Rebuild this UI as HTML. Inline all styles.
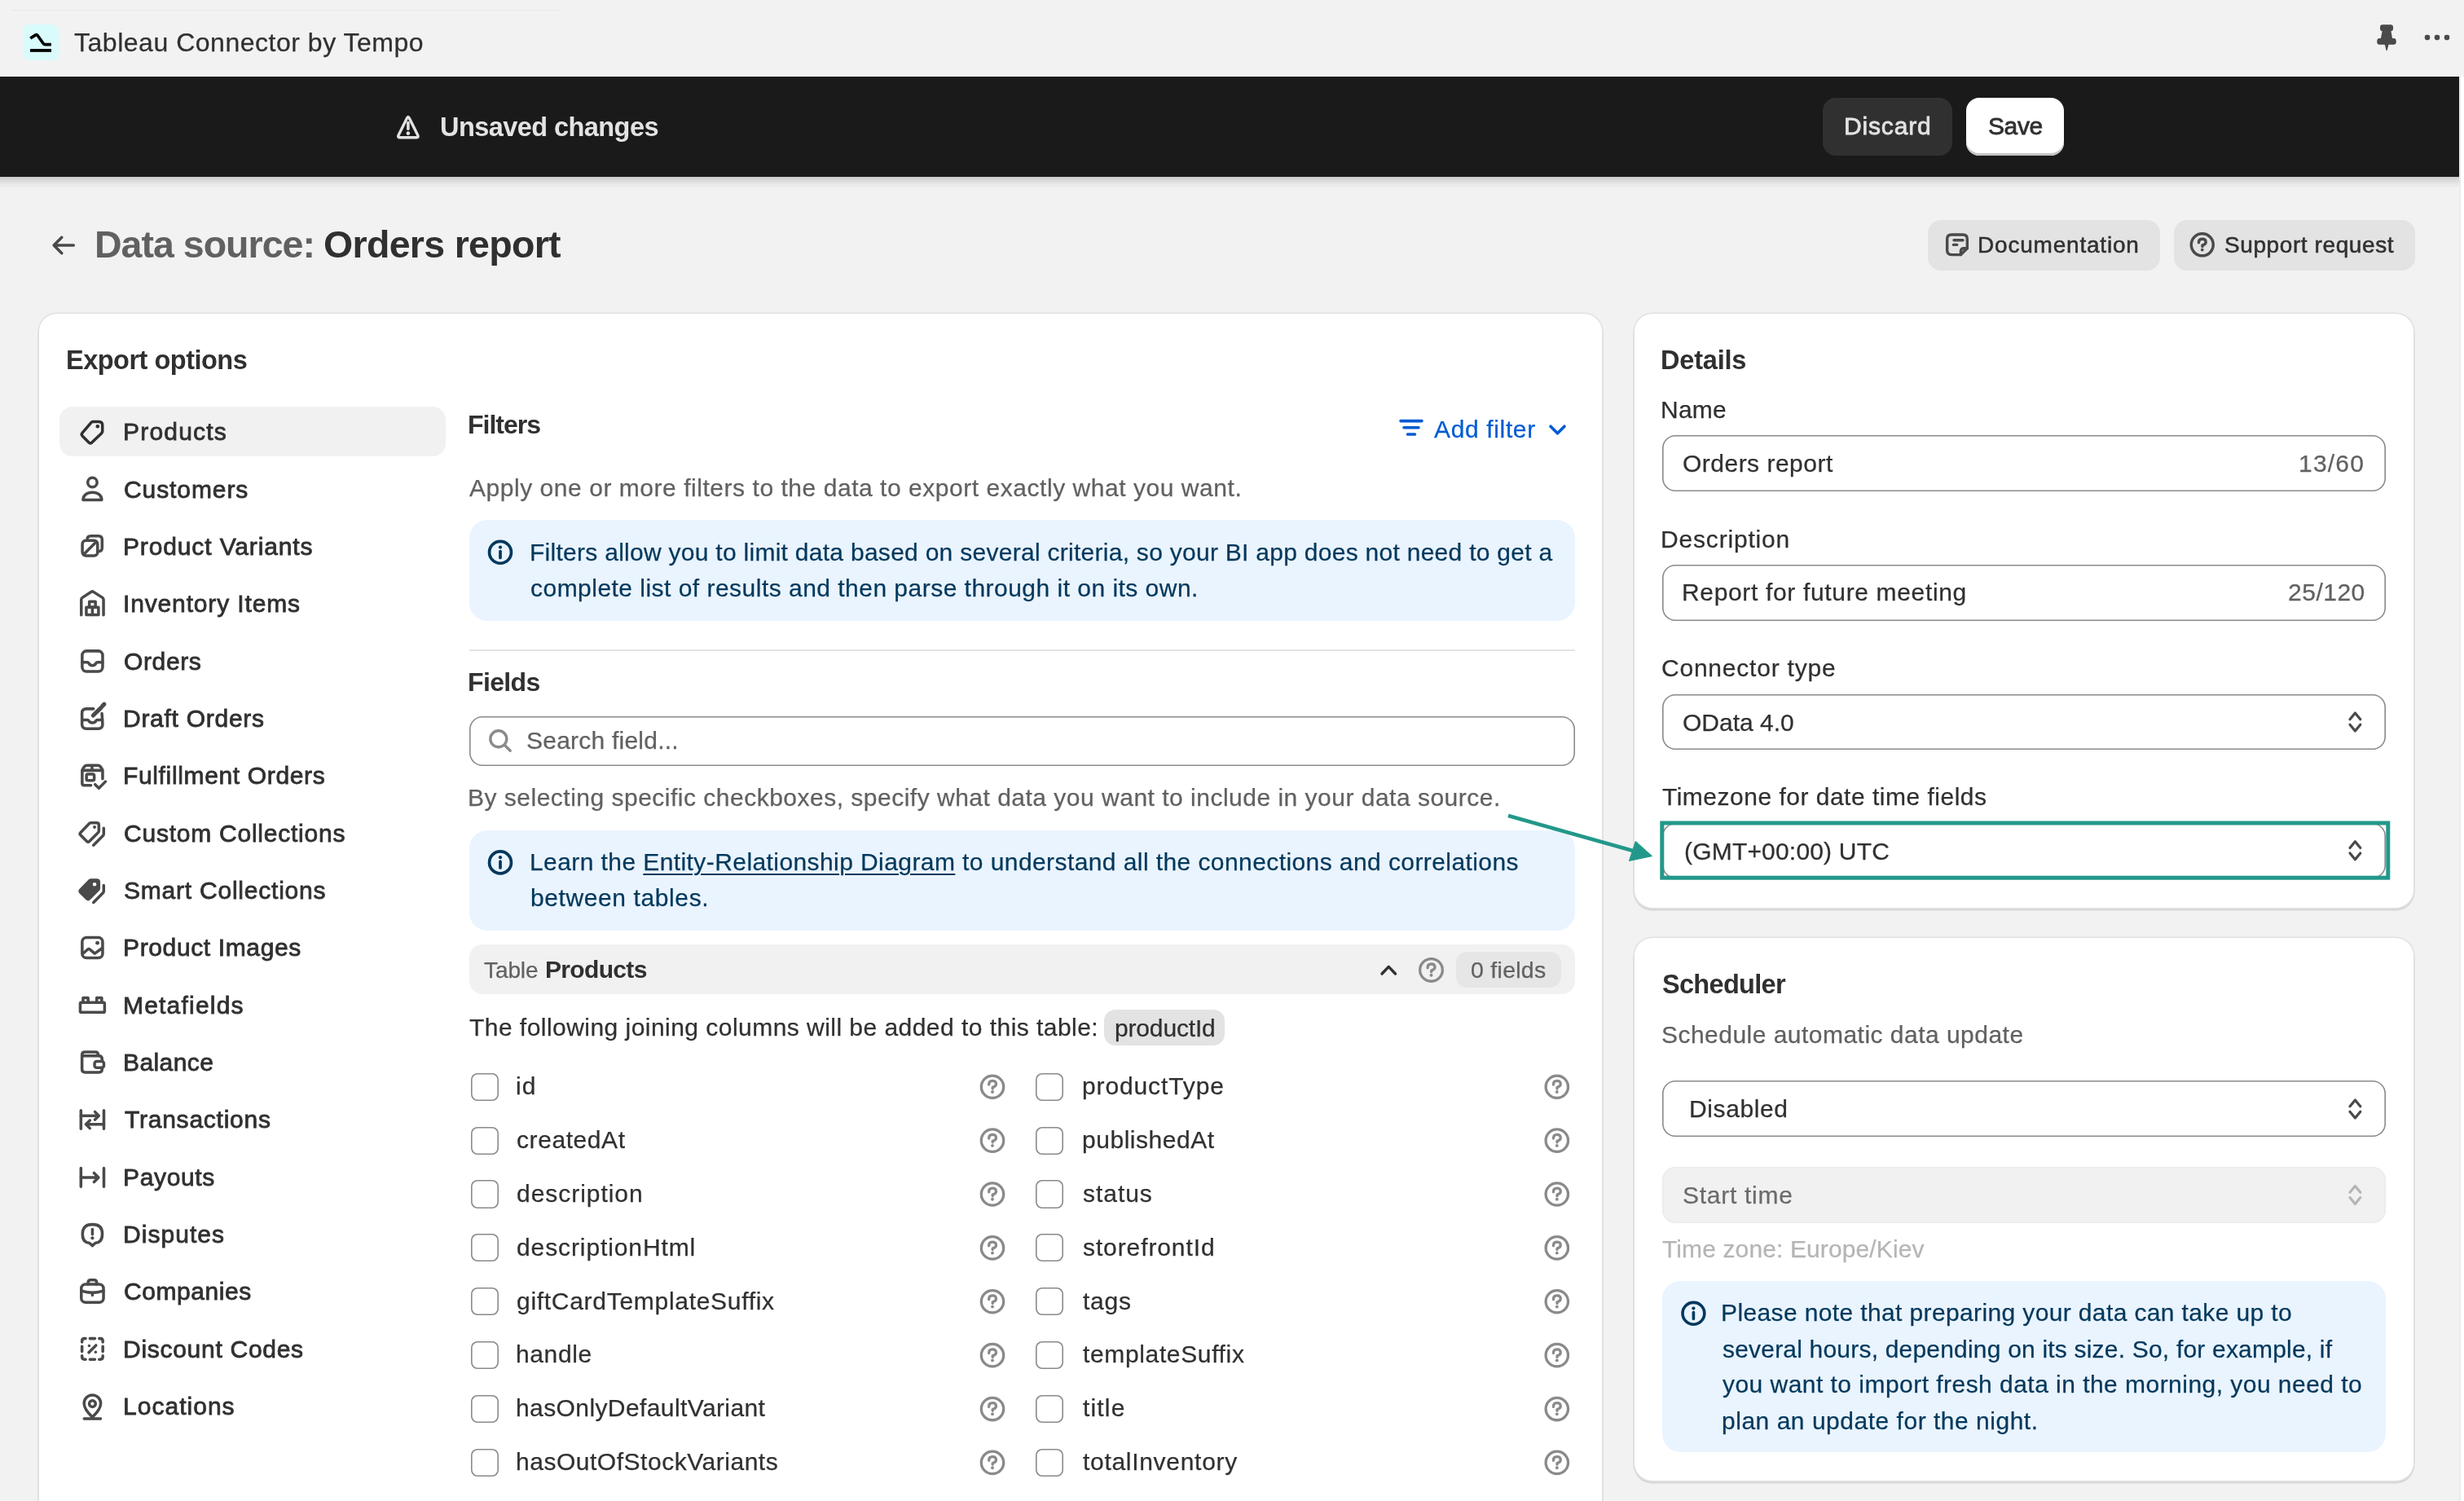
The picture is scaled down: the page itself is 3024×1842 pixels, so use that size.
<!DOCTYPE html>
<html><head><meta charset="utf-8"><style>
html,body{margin:0;padding:0;}
body{width:3024px;height:1842px;overflow:hidden;background:#f2f2f2;position:relative;font-family:"Liberation Sans", sans-serif;}
</style></head><body>
<div style="position:absolute;left:16.00px;top:12.00px;width:670.00px;height:1.00px;background:#e6e6e6"></div>
<div style="position:absolute;left:28.00px;top:30.00px;width:44.00px;height:44.00px;background:#d9fbfc;border-radius:8px"></div>
<div style="position:absolute;left:3018.00px;top:94.00px;width:2.00px;height:1748.00px;background:#ebebeb"></div>
<div style="position:absolute;left:3020.00px;top:94.00px;width:4.00px;height:1748.00px;background:#ffffff"></div>
<div style="position:absolute;left:0.00px;top:217.00px;width:3018.00px;height:13.00px;background:linear-gradient(#c6c6c6 0%, #d6d6d6 22%, #dddddd 40%, #e2e2e2 55%, #eaeaea 70%, #ebebeb 92%, #f2f2f2 100%)"></div>
<div style="position:absolute;left:0.00px;top:94.00px;width:3018.00px;height:123.00px;background:#1a1a1a"></div>
<div style="position:absolute;left:2237.00px;top:120.00px;width:159.00px;height:71.00px;background:#303030;border-radius:16px"></div>
<div style="position:absolute;left:2413.00px;top:120.00px;width:120.00px;height:71.00px;background:#fff;border-radius:16px;box-shadow:inset 0 -3px 0 #c4c4c4"></div>
<div style="position:absolute;left:2366.00px;top:270.00px;width:285.00px;height:62.00px;background:#e3e3e3;border-radius:16px"></div>
<div style="position:absolute;left:2668.00px;top:270.00px;width:296.00px;height:62.00px;background:#e3e3e3;border-radius:16px"></div>
<div style="position:absolute;left:48.00px;top:385.00px;width:1918.30px;height:1600.00px;background:#fff;border-radius:22px;box-shadow:0 0 0 1.6px #e1e1e1, 0 2px 0 1.6px #d6d6d6"></div>
<div style="position:absolute;left:2005.50px;top:385.40px;width:956.50px;height:728.20px;background:#fff;border-radius:22px;box-shadow:0 0 0 1.6px #e1e1e1, 0 2px 0 1.6px #d6d6d6"></div>
<div style="position:absolute;left:2005.50px;top:1151.25px;width:956.50px;height:665.75px;background:#fff;border-radius:22px;box-shadow:0 0 0 1.6px #e1e1e1, 0 2px 0 1.6px #d6d6d6"></div>
<div style="position:absolute;left:73.00px;top:499.00px;width:474.40px;height:60.50px;background:#f1f1f1;border-radius:16px"></div>
<div style="position:absolute;left:575.60px;top:638.00px;width:1357.00px;height:124.00px;background:#eaf4ff;border-radius:22px"></div>
<div style="position:absolute;left:575.60px;top:797.00px;width:1357.00px;height:2.00px;background:#e3e3e3"></div>
<div style="position:absolute;left:575.60px;top:878.50px;width:1357.00px;height:61.00px;background:#fff;border-radius:16px;box-shadow:inset 0 0 0 1.6px #8a8a8a"></div>
<div style="position:absolute;left:575.60px;top:1019.00px;width:1357.00px;height:122.50px;background:#eaf4ff;border-radius:22px"></div>
<div style="position:absolute;left:575.60px;top:1159.40px;width:1357.00px;height:61.00px;background:#f1f1f1;border-radius:16px"></div>
<div style="position:absolute;left:1786.60px;top:1168.00px;width:129.20px;height:44.00px;background:#e6e6e6;border-radius:14px"></div>
<div style="position:absolute;left:1354.80px;top:1239.00px;width:148.70px;height:44.00px;background:#e3e3e3;border-radius:14px"></div>
<div style="position:absolute;left:577.60px;top:1316.70px;width:34.10px;height:34.10px;background:#fff;border-radius:8px;box-shadow:inset 0 0 0 1.6px #8a8a8a"></div>
<div style="position:absolute;left:1271.40px;top:1316.70px;width:34.10px;height:34.10px;background:#fff;border-radius:8px;box-shadow:inset 0 0 0 1.6px #8a8a8a"></div>
<div style="position:absolute;left:577.60px;top:1382.58px;width:34.10px;height:34.10px;background:#fff;border-radius:8px;box-shadow:inset 0 0 0 1.6px #8a8a8a"></div>
<div style="position:absolute;left:1271.40px;top:1382.58px;width:34.10px;height:34.10px;background:#fff;border-radius:8px;box-shadow:inset 0 0 0 1.6px #8a8a8a"></div>
<div style="position:absolute;left:577.60px;top:1448.46px;width:34.10px;height:34.10px;background:#fff;border-radius:8px;box-shadow:inset 0 0 0 1.6px #8a8a8a"></div>
<div style="position:absolute;left:1271.40px;top:1448.46px;width:34.10px;height:34.10px;background:#fff;border-radius:8px;box-shadow:inset 0 0 0 1.6px #8a8a8a"></div>
<div style="position:absolute;left:577.60px;top:1514.34px;width:34.10px;height:34.10px;background:#fff;border-radius:8px;box-shadow:inset 0 0 0 1.6px #8a8a8a"></div>
<div style="position:absolute;left:1271.40px;top:1514.34px;width:34.10px;height:34.10px;background:#fff;border-radius:8px;box-shadow:inset 0 0 0 1.6px #8a8a8a"></div>
<div style="position:absolute;left:577.60px;top:1580.22px;width:34.10px;height:34.10px;background:#fff;border-radius:8px;box-shadow:inset 0 0 0 1.6px #8a8a8a"></div>
<div style="position:absolute;left:1271.40px;top:1580.22px;width:34.10px;height:34.10px;background:#fff;border-radius:8px;box-shadow:inset 0 0 0 1.6px #8a8a8a"></div>
<div style="position:absolute;left:577.60px;top:1646.10px;width:34.10px;height:34.10px;background:#fff;border-radius:8px;box-shadow:inset 0 0 0 1.6px #8a8a8a"></div>
<div style="position:absolute;left:1271.40px;top:1646.10px;width:34.10px;height:34.10px;background:#fff;border-radius:8px;box-shadow:inset 0 0 0 1.6px #8a8a8a"></div>
<div style="position:absolute;left:577.60px;top:1711.98px;width:34.10px;height:34.10px;background:#fff;border-radius:8px;box-shadow:inset 0 0 0 1.6px #8a8a8a"></div>
<div style="position:absolute;left:1271.40px;top:1711.98px;width:34.10px;height:34.10px;background:#fff;border-radius:8px;box-shadow:inset 0 0 0 1.6px #8a8a8a"></div>
<div style="position:absolute;left:577.60px;top:1777.86px;width:34.10px;height:34.10px;background:#fff;border-radius:8px;box-shadow:inset 0 0 0 1.6px #8a8a8a"></div>
<div style="position:absolute;left:1271.40px;top:1777.86px;width:34.10px;height:34.10px;background:#fff;border-radius:8px;box-shadow:inset 0 0 0 1.6px #8a8a8a"></div>
<div style="position:absolute;left:2039.70px;top:534.40px;width:888.80px;height:69.00px;background:#fff;border-radius:16px;box-shadow:inset 0 0 0 1.6px #8a8a8a"></div>
<div style="position:absolute;left:2039.70px;top:692.60px;width:888.80px;height:69.00px;background:#fff;border-radius:16px;box-shadow:inset 0 0 0 1.6px #8a8a8a"></div>
<div style="position:absolute;left:2039.70px;top:851.60px;width:888.80px;height:68.70px;background:#fff;border-radius:16px;box-shadow:inset 0 0 0 1.6px #8a8a8a"></div>
<div style="position:absolute;left:2039.70px;top:1009.60px;width:888.80px;height:68.70px;background:#fff;border-radius:16px;box-shadow:inset 0 0 0 1.6px #8a8a8a"></div>
<div style="position:absolute;left:2039.70px;top:1326.20px;width:888.80px;height:69.00px;background:#fff;border-radius:16px;box-shadow:inset 0 0 0 1.6px #8a8a8a"></div>
<div style="position:absolute;left:2039.70px;top:1431.50px;width:888.80px;height:69.70px;background:#f1f1f1;border-radius:16px;box-shadow:inset 0 0 0 1.6px #ebebeb"></div>
<div style="position:absolute;left:2039.70px;top:1572.20px;width:888.80px;height:210.20px;background:#eaf4ff;border-radius:22px"></div>
<div style="position:absolute;left:91.40px;top:36.02px;font-size:32px;line-height:32px;font-weight:400;-webkit-text-stroke:0.25px #303030;color:#303030;letter-spacing:0.518px;white-space:nowrap;will-change:transform">Tableau Connector by Tempo</div>
<div style="position:absolute;left:540.00px;top:139.77px;font-size:32.5px;line-height:32.5px;font-weight:700;color:#e3e3e3;letter-spacing:-0.563px;white-space:nowrap;will-change:transform">Unsaved changes</div>
<div style="position:absolute;left:2263.00px;top:139.52px;font-size:30px;line-height:30px;font-weight:400;-webkit-text-stroke:0.8px #e3e3e3;color:#e3e3e3;letter-spacing:0.833px;white-space:nowrap;will-change:transform">Discard</div>
<div style="position:absolute;left:2439.80px;top:139.52px;font-size:30px;line-height:30px;font-weight:400;-webkit-text-stroke:0.8px #303030;color:#303030;letter-spacing:-0.398px;white-space:nowrap;will-change:transform">Save</div>
<div style="position:absolute;left:116.00px;top:276.77px;font-size:46.5px;line-height:46.5px;font-weight:700;color:#616161;letter-spacing:-0.981px;white-space:nowrap;will-change:transform">Data source:</div>
<div style="position:absolute;left:396.60px;top:276.77px;font-size:46.5px;line-height:46.5px;font-weight:700;color:#303030;letter-spacing:-0.681px;white-space:nowrap;will-change:transform">Orders report</div>
<div style="position:absolute;left:2427.30px;top:286.52px;font-size:28px;line-height:28px;font-weight:400;-webkit-text-stroke:0.55px #303030;color:#303030;letter-spacing:0.795px;white-space:nowrap;will-change:transform">Documentation</div>
<div style="position:absolute;left:2729.50px;top:286.52px;font-size:28px;line-height:28px;font-weight:400;-webkit-text-stroke:0.55px #303030;color:#303030;letter-spacing:0.596px;white-space:nowrap;will-change:transform">Support request</div>
<div style="position:absolute;left:81.00px;top:425.77px;font-size:32.5px;line-height:32.5px;font-weight:700;color:#303030;letter-spacing:-0.501px;white-space:nowrap;will-change:transform">Export options</div>
<div style="position:absolute;left:151.00px;top:514.52px;font-size:30px;line-height:30px;font-weight:400;-webkit-text-stroke:0.8px #303030;color:#303030;letter-spacing:1.200px;white-space:nowrap;will-change:transform">Products</div>
<div style="position:absolute;left:152.00px;top:585.52px;font-size:30px;line-height:30px;font-weight:400;-webkit-text-stroke:0.8px #303030;color:#303030;letter-spacing:0.908px;white-space:nowrap;will-change:transform">Customers</div>
<div style="position:absolute;left:151.00px;top:655.52px;font-size:30px;line-height:30px;font-weight:400;-webkit-text-stroke:0.8px #303030;color:#303030;letter-spacing:0.863px;white-space:nowrap;will-change:transform">Product Variants</div>
<div style="position:absolute;left:151.00px;top:725.52px;font-size:30px;line-height:30px;font-weight:400;-webkit-text-stroke:0.8px #303030;color:#303030;letter-spacing:0.852px;white-space:nowrap;will-change:transform">Inventory Items</div>
<div style="position:absolute;left:152.00px;top:796.52px;font-size:30px;line-height:30px;font-weight:400;-webkit-text-stroke:0.8px #303030;color:#303030;letter-spacing:0.623px;white-space:nowrap;will-change:transform">Orders</div>
<div style="position:absolute;left:151.00px;top:866.52px;font-size:30px;line-height:30px;font-weight:400;-webkit-text-stroke:0.8px #303030;color:#303030;letter-spacing:0.725px;white-space:nowrap;will-change:transform">Draft Orders</div>
<div style="position:absolute;left:151.00px;top:936.52px;font-size:30px;line-height:30px;font-weight:400;-webkit-text-stroke:0.8px #303030;color:#303030;letter-spacing:0.646px;white-space:nowrap;will-change:transform">Fulfillment Orders</div>
<div style="position:absolute;left:152.00px;top:1007.52px;font-size:30px;line-height:30px;font-weight:400;-webkit-text-stroke:0.8px #303030;color:#303030;letter-spacing:0.763px;white-space:nowrap;will-change:transform">Custom Collections</div>
<div style="position:absolute;left:152.00px;top:1077.52px;font-size:30px;line-height:30px;font-weight:400;-webkit-text-stroke:0.8px #303030;color:#303030;letter-spacing:0.776px;white-space:nowrap;will-change:transform">Smart Collections</div>
<div style="position:absolute;left:151.00px;top:1147.52px;font-size:30px;line-height:30px;font-weight:400;-webkit-text-stroke:0.8px #303030;color:#303030;letter-spacing:0.631px;white-space:nowrap;will-change:transform">Product Images</div>
<div style="position:absolute;left:151.00px;top:1218.52px;font-size:30px;line-height:30px;font-weight:400;-webkit-text-stroke:0.8px #303030;color:#303030;letter-spacing:1.200px;white-space:nowrap;will-change:transform">Metafields</div>
<div style="position:absolute;left:151.00px;top:1288.52px;font-size:30px;line-height:30px;font-weight:400;-webkit-text-stroke:0.8px #303030;color:#303030;letter-spacing:0.412px;white-space:nowrap;will-change:transform">Balance</div>
<div style="position:absolute;left:153.00px;top:1358.52px;font-size:30px;line-height:30px;font-weight:400;-webkit-text-stroke:0.8px #303030;color:#303030;letter-spacing:0.761px;white-space:nowrap;will-change:transform">Transactions</div>
<div style="position:absolute;left:151.00px;top:1429.52px;font-size:30px;line-height:30px;font-weight:400;-webkit-text-stroke:0.8px #303030;color:#303030;letter-spacing:0.650px;white-space:nowrap;will-change:transform">Payouts</div>
<div style="position:absolute;left:151.00px;top:1499.52px;font-size:30px;line-height:30px;font-weight:400;-webkit-text-stroke:0.8px #303030;color:#303030;letter-spacing:1.040px;white-space:nowrap;will-change:transform">Disputes</div>
<div style="position:absolute;left:152.00px;top:1569.52px;font-size:30px;line-height:30px;font-weight:400;-webkit-text-stroke:0.8px #303030;color:#303030;letter-spacing:0.557px;white-space:nowrap;will-change:transform">Companies</div>
<div style="position:absolute;left:151.00px;top:1640.52px;font-size:30px;line-height:30px;font-weight:400;-webkit-text-stroke:0.8px #303030;color:#303030;letter-spacing:0.718px;white-space:nowrap;will-change:transform">Discount Codes</div>
<div style="position:absolute;left:151.00px;top:1710.52px;font-size:30px;line-height:30px;font-weight:400;-webkit-text-stroke:0.8px #303030;color:#303030;letter-spacing:1.022px;white-space:nowrap;will-change:transform">Locations</div>
<div style="position:absolute;left:573.60px;top:505.02px;font-size:32px;line-height:32px;font-weight:700;color:#303030;letter-spacing:-1.000px;white-space:nowrap;will-change:transform">Filters</div>
<div style="position:absolute;left:1759.50px;top:511.52px;font-size:30px;line-height:30px;font-weight:400;-webkit-text-stroke:0.25px #005bd3;color:#005bd3;letter-spacing:0.645px;white-space:nowrap;will-change:transform">Add filter</div>
<div style="position:absolute;left:575.60px;top:583.52px;font-size:30px;line-height:30px;font-weight:400;-webkit-text-stroke:0.25px #616161;color:#616161;letter-spacing:0.540px;white-space:nowrap;will-change:transform">Apply one or more filters to the data to export exactly what you want.</div>
<div style="position:absolute;left:649.75px;top:662.52px;font-size:30px;line-height:30px;font-weight:400;-webkit-text-stroke:0.25px #00385c;color:#00385c;letter-spacing:0.275px;white-space:nowrap;will-change:transform">Filters allow you to limit data based on several criteria, so your BI app does not need to get a</div>
<div style="position:absolute;left:650.75px;top:706.52px;font-size:30px;line-height:30px;font-weight:400;-webkit-text-stroke:0.25px #00385c;color:#00385c;letter-spacing:0.475px;white-space:nowrap;will-change:transform">complete list of results and then parse through it on its own.</div>
<div style="position:absolute;left:573.60px;top:821.02px;font-size:32px;line-height:32px;font-weight:700;color:#303030;letter-spacing:-0.654px;white-space:nowrap;will-change:transform">Fields</div>
<div style="position:absolute;left:645.60px;top:893.52px;font-size:30px;line-height:30px;font-weight:400;-webkit-text-stroke:0.25px #616161;color:#616161;letter-spacing:0.229px;white-space:nowrap;will-change:transform">Search field...</div>
<div style="position:absolute;left:573.60px;top:963.52px;font-size:30px;line-height:30px;font-weight:400;-webkit-text-stroke:0.25px #616161;color:#616161;letter-spacing:0.494px;white-space:nowrap;will-change:transform">By selecting specific checkboxes, specify what data you want to include in your data source.</div>
<div style="position:absolute;left:649.75px;top:1042.52px;font-size:30px;line-height:30px;font-weight:400;-webkit-text-stroke:0.25px #00385c;color:#00385c;letter-spacing:0.416px;white-space:nowrap;will-change:transform">Learn the <span style="text-decoration:underline;text-decoration-thickness:2px;text-underline-offset:4px">Entity-Relationship Diagram</span> to understand all the connections and correlations</div>
<div style="position:absolute;left:650.75px;top:1086.52px;font-size:30px;line-height:30px;font-weight:400;-webkit-text-stroke:0.25px #00385c;color:#00385c;letter-spacing:0.603px;white-space:nowrap;will-change:transform">between tables.</div>
<div style="position:absolute;left:594.00px;top:1176.52px;font-size:28px;line-height:28px;font-weight:400;-webkit-text-stroke:0.25px #616161;color:#616161;letter-spacing:-0.091px;white-space:nowrap;will-change:transform">Table</div>
<div style="position:absolute;left:668.80px;top:1174.52px;font-size:30px;line-height:30px;font-weight:700;color:#303030;letter-spacing:-0.662px;white-space:nowrap;will-change:transform">Products</div>
<div style="position:absolute;left:1805.00px;top:1175.77px;font-size:28.5px;line-height:28.5px;font-weight:400;-webkit-text-stroke:0.25px #616161;color:#616161;letter-spacing:0.278px;white-space:nowrap;will-change:transform">0 fields</div>
<div style="position:absolute;left:575.60px;top:1245.52px;font-size:30px;line-height:30px;font-weight:400;-webkit-text-stroke:0.25px #303030;color:#303030;letter-spacing:0.461px;white-space:nowrap;will-change:transform">The following joining columns will be added to this table:</div>
<div style="position:absolute;left:1368.40px;top:1246.52px;font-size:30px;line-height:30px;font-weight:400;-webkit-text-stroke:0.25px #303030;color:#303030;letter-spacing:-0.162px;white-space:nowrap;will-change:transform">productId</div>
<div style="position:absolute;left:633.30px;top:1317.52px;font-size:30px;line-height:30px;font-weight:400;-webkit-text-stroke:0.25px #303030;color:#303030;letter-spacing:1.200px;white-space:nowrap;will-change:transform">id</div>
<div style="position:absolute;left:1327.80px;top:1317.52px;font-size:30px;line-height:30px;font-weight:400;-webkit-text-stroke:0.25px #303030;color:#303030;letter-spacing:0.878px;white-space:nowrap;will-change:transform">productType</div>
<div style="position:absolute;left:634.30px;top:1383.52px;font-size:30px;line-height:30px;font-weight:400;-webkit-text-stroke:0.25px #303030;color:#303030;letter-spacing:0.578px;white-space:nowrap;will-change:transform">createdAt</div>
<div style="position:absolute;left:1327.80px;top:1383.52px;font-size:30px;line-height:30px;font-weight:400;-webkit-text-stroke:0.25px #303030;color:#303030;letter-spacing:0.525px;white-space:nowrap;will-change:transform">publishedAt</div>
<div style="position:absolute;left:634.30px;top:1449.52px;font-size:30px;line-height:30px;font-weight:400;-webkit-text-stroke:0.25px #303030;color:#303030;letter-spacing:0.961px;white-space:nowrap;will-change:transform">description</div>
<div style="position:absolute;left:1328.80px;top:1449.52px;font-size:30px;line-height:30px;font-weight:400;-webkit-text-stroke:0.25px #303030;color:#303030;letter-spacing:0.952px;white-space:nowrap;will-change:transform">status</div>
<div style="position:absolute;left:634.30px;top:1515.52px;font-size:30px;line-height:30px;font-weight:400;-webkit-text-stroke:0.25px #303030;color:#303030;letter-spacing:0.895px;white-space:nowrap;will-change:transform">descriptionHtml</div>
<div style="position:absolute;left:1328.80px;top:1515.52px;font-size:30px;line-height:30px;font-weight:400;-webkit-text-stroke:0.25px #303030;color:#303030;letter-spacing:0.895px;white-space:nowrap;will-change:transform">storefrontId</div>
<div style="position:absolute;left:634.30px;top:1581.52px;font-size:30px;line-height:30px;font-weight:400;-webkit-text-stroke:0.25px #303030;color:#303030;letter-spacing:0.707px;white-space:nowrap;will-change:transform">giftCardTemplateSuffix</div>
<div style="position:absolute;left:1328.80px;top:1581.52px;font-size:30px;line-height:30px;font-weight:400;-webkit-text-stroke:0.25px #303030;color:#303030;letter-spacing:0.765px;white-space:nowrap;will-change:transform">tags</div>
<div style="position:absolute;left:633.30px;top:1646.52px;font-size:30px;line-height:30px;font-weight:400;-webkit-text-stroke:0.25px #303030;color:#303030;letter-spacing:0.619px;white-space:nowrap;will-change:transform">handle</div>
<div style="position:absolute;left:1328.80px;top:1646.52px;font-size:30px;line-height:30px;font-weight:400;-webkit-text-stroke:0.25px #303030;color:#303030;letter-spacing:0.642px;white-space:nowrap;will-change:transform">templateSuffix</div>
<div style="position:absolute;left:633.30px;top:1712.52px;font-size:30px;line-height:30px;font-weight:400;-webkit-text-stroke:0.25px #303030;color:#303030;letter-spacing:0.400px;white-space:nowrap;will-change:transform">hasOnlyDefaultVariant</div>
<div style="position:absolute;left:1328.80px;top:1712.52px;font-size:30px;line-height:30px;font-weight:400;-webkit-text-stroke:0.25px #303030;color:#303030;letter-spacing:1.175px;white-space:nowrap;will-change:transform">title</div>
<div style="position:absolute;left:633.30px;top:1778.52px;font-size:30px;line-height:30px;font-weight:400;-webkit-text-stroke:0.25px #303030;color:#303030;letter-spacing:0.523px;white-space:nowrap;will-change:transform">hasOutOfStockVariants</div>
<div style="position:absolute;left:1328.80px;top:1778.52px;font-size:30px;line-height:30px;font-weight:400;-webkit-text-stroke:0.25px #303030;color:#303030;letter-spacing:0.700px;white-space:nowrap;will-change:transform">totalInventory</div>
<div style="position:absolute;left:2038.00px;top:425.77px;font-size:32.5px;line-height:32.5px;font-weight:700;color:#303030;letter-spacing:-0.200px;white-space:nowrap;will-change:transform">Details</div>
<div style="position:absolute;left:2038.00px;top:487.52px;font-size:30px;line-height:30px;font-weight:400;-webkit-text-stroke:0.25px #303030;color:#303030;letter-spacing:0.220px;white-space:nowrap;will-change:transform">Name</div>
<div style="position:absolute;left:2065.00px;top:553.52px;font-size:30px;line-height:30px;font-weight:400;-webkit-text-stroke:0.25px #303030;color:#303030;letter-spacing:0.487px;white-space:nowrap;will-change:transform">Orders report</div>
<div style="position:absolute;left:2821.30px;top:553.52px;font-size:30px;line-height:30px;font-weight:400;-webkit-text-stroke:0.25px #616161;color:#616161;letter-spacing:1.200px;white-space:nowrap;will-change:transform">13/60</div>
<div style="position:absolute;left:2038.00px;top:646.52px;font-size:30px;line-height:30px;font-weight:400;-webkit-text-stroke:0.25px #303030;color:#303030;letter-spacing:0.823px;white-space:nowrap;will-change:transform">Description</div>
<div style="position:absolute;left:2064.00px;top:711.52px;font-size:30px;line-height:30px;font-weight:400;-webkit-text-stroke:0.25px #303030;color:#303030;letter-spacing:0.658px;white-space:nowrap;will-change:transform">Report for future meeting</div>
<div style="position:absolute;left:2807.70px;top:711.52px;font-size:30px;line-height:30px;font-weight:400;-webkit-text-stroke:0.25px #616161;color:#616161;letter-spacing:0.505px;white-space:nowrap;will-change:transform">25/120</div>
<div style="position:absolute;left:2038.60px;top:804.52px;font-size:30px;line-height:30px;font-weight:400;-webkit-text-stroke:0.25px #303030;color:#303030;letter-spacing:0.779px;white-space:nowrap;will-change:transform">Connector type</div>
<div style="position:absolute;left:2065.40px;top:871.52px;font-size:30px;line-height:30px;font-weight:400;-webkit-text-stroke:0.25px #303030;color:#303030;letter-spacing:-0.007px;white-space:nowrap;will-change:transform">OData 4.0</div>
<div style="position:absolute;left:2039.60px;top:962.52px;font-size:30px;line-height:30px;font-weight:400;-webkit-text-stroke:0.25px #303030;color:#303030;letter-spacing:0.498px;white-space:nowrap;will-change:transform">Timezone for date time fields</div>
<div style="position:absolute;left:2067.00px;top:1029.52px;font-size:30px;line-height:30px;font-weight:400;-webkit-text-stroke:0.25px #303030;color:#303030;letter-spacing:0.189px;white-space:nowrap;will-change:transform">(GMT+00:00) UTC</div>
<div style="position:absolute;left:2040.00px;top:1191.77px;font-size:32.5px;line-height:32.5px;font-weight:700;color:#303030;letter-spacing:-0.699px;white-space:nowrap;will-change:transform">Scheduler</div>
<div style="position:absolute;left:2039.00px;top:1254.52px;font-size:30px;line-height:30px;font-weight:400;-webkit-text-stroke:0.25px #616161;color:#616161;letter-spacing:0.475px;white-space:nowrap;will-change:transform">Schedule automatic data update</div>
<div style="position:absolute;left:2072.60px;top:1345.52px;font-size:30px;line-height:30px;font-weight:400;-webkit-text-stroke:0.25px #303030;color:#303030;letter-spacing:0.607px;white-space:nowrap;will-change:transform">Disabled</div>
<div style="position:absolute;left:2065.00px;top:1451.52px;font-size:30px;line-height:30px;font-weight:400;-webkit-text-stroke:0.25px #6b6b6b;color:#6b6b6b;letter-spacing:0.724px;white-space:nowrap;will-change:transform">Start time</div>
<div style="position:absolute;left:2040.00px;top:1517.52px;font-size:30px;line-height:30px;font-weight:400;-webkit-text-stroke:0.25px #b5b5b5;color:#b5b5b5;letter-spacing:0.117px;white-space:nowrap;will-change:transform">Time zone: Europe/Kiev</div>
<div style="position:absolute;left:2112.00px;top:1595.52px;font-size:30px;line-height:30px;font-weight:400;-webkit-text-stroke:0.25px #00385c;color:#00385c;letter-spacing:0.371px;white-space:nowrap;will-change:transform">Please note that preparing your data can take up to</div>
<div style="position:absolute;left:2114.00px;top:1640.52px;font-size:30px;line-height:30px;font-weight:400;-webkit-text-stroke:0.25px #00385c;color:#00385c;letter-spacing:0.196px;white-space:nowrap;will-change:transform">several hours, depending on its size. So, for example, if</div>
<div style="position:absolute;left:2114.00px;top:1683.52px;font-size:30px;line-height:30px;font-weight:400;-webkit-text-stroke:0.25px #00385c;color:#00385c;letter-spacing:0.463px;white-space:nowrap;will-change:transform">you want to import fresh data in the morning, you need to</div>
<div style="position:absolute;left:2113.00px;top:1728.52px;font-size:30px;line-height:30px;font-weight:400;-webkit-text-stroke:0.25px #00385c;color:#00385c;letter-spacing:0.515px;white-space:nowrap;will-change:transform">plan an update for the night.</div>
<svg style="position:absolute;left:0;top:0" width="3024" height="1842" viewBox="0 0 3024 1842">
<g transform="translate(91.40,508.10) scale(2.2)" fill="none" stroke="#303030" stroke-width="1.6" stroke-linecap="round" stroke-linejoin="round"><path d="M10.2 4.3 L13.6 4.3 Q15.6 4.3 15.6 6.3 L15.6 9.5 Q15.6 10.2 15.1 10.7 L9.7 15.9 Q8.8 16.7 8.0 15.9 L4.4 12.2 Q3.6 11.3 4.4 10.5 L9.4 4.7 Q9.7 4.3 10.2 4.3 Z"/><circle cx="12.9" cy="6.9" r="1.05" fill="#303030" stroke="none"/></g>
<g transform="translate(91.40,578.43) scale(2.2)" fill="none" stroke="#4a4a4a" stroke-width="1.6" stroke-linecap="round" stroke-linejoin="round"><circle cx="10" cy="6.2" r="2.6"/><path d="M4.8 15.9 C4.8 13.3 7.1 11.7 10 11.7 C12.9 11.7 15.2 13.3 15.2 15.9 Z"/></g>
<g transform="translate(91.40,648.76) scale(2.2)" fill="none" stroke="#4a4a4a" stroke-width="1.6" stroke-linecap="round" stroke-linejoin="round"><path d="M7.1 6.4 V6.1 Q7.1 4.1 9.1 4.1 H13.4 Q15.4 4.1 15.4 6.1 V10.7 Q15.4 12.7 13.4 12.7 H13"/><rect x="4.4" y="6.6" width="8.5" height="8.5" rx="2"/><path d="M5.2 14.3 L12.1 7.4"/></g>
<g transform="translate(91.40,719.09) scale(2.2)" fill="none" stroke="#4a4a4a" stroke-width="1.6" stroke-linecap="round" stroke-linejoin="round"><path d="M3.8 16.2 V7.6 Q3.8 6.9 4.4 6.5 L9.4 3.3 Q10 2.9 10.6 3.3 L15.6 6.5 Q16.2 6.9 16.2 7.6 V16.2"/><rect x="6.6" y="11.9" width="6.8" height="4.2"/><path d="M10 11.9 V16.1"/><rect x="8.3" y="8.7" width="3.4" height="3.2"/></g>
<g transform="translate(91.40,789.42) scale(2.2)" fill="none" stroke="#4a4a4a" stroke-width="1.6" stroke-linecap="round" stroke-linejoin="round"><rect x="4.3" y="4.3" width="11.4" height="11.4" rx="2.4"/><path d="M4.3 10.6 H7.3 Q7.7 10.6 7.9 11 Q8.6 12.4 10 12.4 Q11.4 12.4 12.1 11 Q12.3 10.6 12.7 10.6 H15.7"/></g>
<g transform="translate(91.40,859.75) scale(2.2)" fill="none" stroke="#4a4a4a" stroke-width="1.6" stroke-linecap="round" stroke-linejoin="round"><path d="M10.6 4.6 H6.6 Q4.3 4.6 4.2 6.8 L4.2 13.3 Q4.3 15.65 6.6 15.65 H13.3 Q15.6 15.65 15.7 13.3 L15.3 7.2"/><path d="M4.3 10.75 H7.3 Q7.7 10.75 7.9 11.15 Q8.5 12.4 10 12.4 Q11.5 12.4 12.1 11.15 Q12.3 10.75 12.7 10.75 H15.6"/><path d="M10.4 8.3 L14.9 3.9" stroke-width="2.3"/><path d="M15.6 3.0 L16.6 2.0" stroke-width="2.3"/></g>
<g transform="translate(91.40,930.08) scale(2.2)" fill="none" stroke="#4a4a4a" stroke-width="1.6" stroke-linecap="round" stroke-linejoin="round"><path d="M15.7 11.7 V7.4 Q15.7 6.6 15.2 5.9 L14.4 4.8 Q13.9 4.2 13.1 4.2 H6.9 Q6.1 4.2 5.6 4.8 L4.8 5.9 Q4.3 6.6 4.3 7.4 V14.3 Q4.3 15.3 5.3 15.3 H9.2"/><path d="M4.4 6.95 H15.6 M9.8 4.3 V6.9"/><rect x="6.7" y="9.1" width="4.3" height="3.5" rx="0.8"/><path d="M11.5 14.8 L13.6 16.9 L17.3 13.2"/></g>
<g transform="translate(91.40,1000.41) scale(2.2)" fill="none" stroke="#4a4a4a" stroke-width="1.6" stroke-linecap="round" stroke-linejoin="round"><path d="M9.0 4.2 L12.4 4.2 Q13.6 4.2 13.6 5.4 L13.6 8.8 Q13.6 9.3 13.2 9.7 L8.3 14.6 Q7.6 15.3 6.9 14.6 L3.4 11.1 Q2.7 10.4 3.4 9.7 L8.3 4.6 Q8.6 4.2 9.0 4.2 Z"/><circle cx="11.2" cy="6.6" r="0.9" fill="#4a4a4a" stroke="none"/><path d="M16.3 7.2 V10.4 Q16.3 11 15.9 11.4 L10.6 16.7"/></g>
<g transform="translate(91.40,1070.74) scale(2.2)" fill="none" stroke="#4a4a4a" stroke-width="1.6" stroke-linecap="round" stroke-linejoin="round"><path d="M9.0 4.2 L12.4 4.2 Q13.6 4.2 13.6 5.4 L13.6 8.8 Q13.6 9.3 13.2 9.7 L8.3 14.6 Q7.6 15.3 6.9 14.6 L3.4 11.1 Q2.7 10.4 3.4 9.7 L8.3 4.6 Q8.6 4.2 9.0 4.2 Z" fill="#4a4a4a"/><circle cx="11.2" cy="6.6" r="1.0" fill="#fff" stroke="none"/><path d="M16.3 7.2 V10.4 Q16.3 11 15.9 11.4 L10.6 16.7"/></g>
<g transform="translate(91.40,1141.07) scale(2.2)" fill="none" stroke="#4a4a4a" stroke-width="1.6" stroke-linecap="round" stroke-linejoin="round"><rect x="4.3" y="4.3" width="11.4" height="11.4" rx="2.4"/><path d="M4.6 13.4 L7.4 10.9 Q8 10.4 8.6 10.9 L11.3 13.2 L15.5 10.2"/><circle cx="12.8" cy="7.3" r="1.1" fill="#4a4a4a" stroke="none"/></g>
<g transform="translate(91.40,1211.40) scale(2.2)" fill="none" stroke="#4a4a4a" stroke-width="1.6" stroke-linecap="round" stroke-linejoin="round"><rect x="3.2" y="8.6" width="13.6" height="5.4" rx="0.6"/><path d="M4.8 8.6 V6 H7.6 V8.6 M12.4 8.6 V6 H15.2 V8.6"/></g>
<g transform="translate(91.40,1281.73) scale(2.2)" fill="none" stroke="#4a4a4a" stroke-width="1.6" stroke-linecap="round" stroke-linejoin="round"><path d="M13.2 6.2 V5.8 Q13.2 4.2 11.6 4.2 H5.8 Q4.2 4.2 4.2 5.8 V13.8 Q4.2 15.6 6 15.6 H13.6 Q15.4 15.6 15.4 13.8 V13"/><path d="M4.2 6.4 H13.6 Q15.4 6.4 15.4 8.2 V9.2"/><rect x="11.2" y="9.4" width="5.2" height="3.6" rx="1.2"/></g>
<g transform="translate(91.40,1352.06) scale(2.2)" fill="none" stroke="#4a4a4a" stroke-width="1.6" stroke-linecap="round" stroke-linejoin="round"><path d="M3.6 4.9 V15.1 M16.4 4.9 V15.1"/><path d="M3.6 7.8 H13.6 M11.4 5.6 L13.6 7.8 L11.4 10.0"/><path d="M16.4 12.6 H6.4 M8.6 10.4 L6.4 12.6 L8.6 14.8"/></g>
<g transform="translate(91.40,1422.39) scale(2.2)" fill="none" stroke="#4a4a4a" stroke-width="1.6" stroke-linecap="round" stroke-linejoin="round"><path d="M3.6 5.1 V15.4 M16.4 5.1 V15.4"/><path d="M3.6 10.25 H13.4 M10.9 7.75 L13.4 10.25 L10.9 12.75"/></g>
<g transform="translate(91.40,1492.72) scale(2.2)" fill="none" stroke="#4a4a4a" stroke-width="1.6" stroke-linecap="round" stroke-linejoin="round"><path d="M10 16.4 L8.4 14.9 Q4.5 14.6 4.5 10 V9.6 Q4.5 4.5 10 4.5 Q15.5 4.5 15.5 9.6 V10 Q15.5 14.6 11.6 14.9 Z"/><path d="M10 7.2 V10"/><circle cx="10" cy="12.1" r="0.95" fill="#4a4a4a" stroke="none"/></g>
<g transform="translate(91.40,1563.05) scale(2.2)" fill="none" stroke="#4a4a4a" stroke-width="1.6" stroke-linecap="round" stroke-linejoin="round"><rect x="3.8" y="5.9" width="12.4" height="10.1" rx="2.4"/><path d="M7.6 5.9 V5.0 Q7.6 3.5 9.1 3.5 H10.9 Q12.4 3.5 12.4 5.0 V5.9"/><path d="M3.9 9.6 Q10 11.6 16.1 9.6"/><path d="M10 10.7 V12"/></g>
<g transform="translate(91.40,1633.38) scale(2.2)" fill="none" stroke="#4a4a4a" stroke-width="1.6" stroke-linecap="round" stroke-linejoin="round"><path d="M4.2 6.2 V5.6 Q4.2 4.2 5.6 4.2 H6.2 M8.6 4.2 H11.4 M13.8 4.2 H14.4 Q15.8 4.2 15.8 5.6 V6.2 M15.8 8.6 V11.4 M15.8 13.8 V14.4 Q15.8 15.8 14.4 15.8 H13.8 M11.4 15.8 H8.6 M6.2 15.8 H5.6 Q4.2 15.8 4.2 14.4 V13.8 M4.2 11.4 V8.6"/><path d="M8 12 L12 8"/><circle cx="8.2" cy="8.2" r="0.8" fill="#4a4a4a" stroke="none"/><circle cx="11.8" cy="11.8" r="0.8" fill="#4a4a4a" stroke="none"/></g>
<g transform="translate(91.40,1703.71) scale(2.2)" fill="none" stroke="#4a4a4a" stroke-width="1.6" stroke-linecap="round" stroke-linejoin="round"><path d="M10 16.1 C7 13.2 5.35 11 5.35 8.4 A4.65 4.65 0 0 1 14.65 8.4 C14.65 11 13 13.2 10 16.1 Z"/><circle cx="10" cy="8.6" r="1.75"/><path d="M5.4 16.9 H14.6"/></g>
<g fill="none" stroke="#e3e3e3" stroke-width="3.4" stroke-linecap="round" stroke-linejoin="round"><path d="M499.34 145.14 Q500.9 142.0 502.46 145.14 L512.64 165.66 Q514.2 168.8 510.7 168.8 L491.1 168.8 Q487.6 168.8 489.16 165.66 Z"/><path d="M500.9 150.6 V158.2" stroke-width="3.6"/></g><circle cx="500.9" cy="163.6" r="2.3" fill="#e3e3e3"/>
<g transform="translate(56.00,279.00) scale(2.2)" fill="none" stroke="#4a4a4a" stroke-width="1.6" stroke-linecap="round" stroke-linejoin="round"><path d="M15.6 10 H4.6 M9 5.6 L4.6 10 L9 14.4"/></g>
<g transform="translate(2380.00,278.30) scale(2.2)" fill="none" stroke="#4a4a4a" stroke-width="1.55" stroke-linecap="round" stroke-linejoin="round"><path d="M15.6 12.0 V6.8 Q15.6 4.4 13.2 4.4 H6.8 Q4.4 4.4 4.4 6.8 V13.2 Q4.4 15.6 6.8 15.6 H12.0 Z"/><path d="M12 15.6 V13.8 Q12 12 13.8 12 H15.6"/><path d="M8.2 7.5 H13.2 M7.9 10.05 H9.9"/></g>
<g fill="none" stroke="#4a4a4a" stroke-width="3.5" stroke-linecap="round" stroke-linejoin="round"><circle cx="2702.75" cy="300.35" r="13.50"/><path d="M2698.45 297.75 Q2698.45 293.15 2702.75 293.15 Q2707.15 293.15 2707.15 297.15 Q2707.15 299.75 2702.95 300.95 V302.55"/><circle cx="2702.75" cy="306.55" r="1.90" fill="#4a4a4a" stroke="none"/></g>
<g fill="none" stroke="#8a8a8a" stroke-width="3.3" stroke-linecap="round" stroke-linejoin="round"><circle cx="1756.50" cy="1190.40" r="13.85"/><path d="M1752.09 1187.73 Q1752.09 1183.01 1756.50 1183.01 Q1761.01 1183.01 1761.01 1187.12 Q1761.01 1189.78 1756.71 1191.02 V1192.66"/><circle cx="1756.50" cy="1196.76" r="1.95" fill="#8a8a8a" stroke="none"/></g>
<g fill="none" stroke="#8a8a8a" stroke-width="3.3" stroke-linecap="round" stroke-linejoin="round"><circle cx="1218.00" cy="1333.75" r="13.70"/><path d="M1213.64 1331.11 Q1213.64 1326.44 1218.00 1326.44 Q1222.47 1326.44 1222.47 1330.50 Q1222.47 1333.14 1218.20 1334.36 V1335.98"/><circle cx="1218.00" cy="1340.04" r="1.93" fill="#8a8a8a" stroke="none"/></g>
<g fill="none" stroke="#8a8a8a" stroke-width="3.3" stroke-linecap="round" stroke-linejoin="round"><circle cx="1910.80" cy="1333.75" r="13.70"/><path d="M1906.44 1331.11 Q1906.44 1326.44 1910.80 1326.44 Q1915.27 1326.44 1915.27 1330.50 Q1915.27 1333.14 1911.00 1334.36 V1335.98"/><circle cx="1910.80" cy="1340.04" r="1.93" fill="#8a8a8a" stroke="none"/></g>
<g fill="none" stroke="#8a8a8a" stroke-width="3.3" stroke-linecap="round" stroke-linejoin="round"><circle cx="1218.00" cy="1399.63" r="13.70"/><path d="M1213.64 1396.99 Q1213.64 1392.32 1218.00 1392.32 Q1222.47 1392.32 1222.47 1396.38 Q1222.47 1399.02 1218.20 1400.24 V1401.86"/><circle cx="1218.00" cy="1405.92" r="1.93" fill="#8a8a8a" stroke="none"/></g>
<g fill="none" stroke="#8a8a8a" stroke-width="3.3" stroke-linecap="round" stroke-linejoin="round"><circle cx="1910.80" cy="1399.63" r="13.70"/><path d="M1906.44 1396.99 Q1906.44 1392.32 1910.80 1392.32 Q1915.27 1392.32 1915.27 1396.38 Q1915.27 1399.02 1911.00 1400.24 V1401.86"/><circle cx="1910.80" cy="1405.92" r="1.93" fill="#8a8a8a" stroke="none"/></g>
<g fill="none" stroke="#8a8a8a" stroke-width="3.3" stroke-linecap="round" stroke-linejoin="round"><circle cx="1218.00" cy="1465.51" r="13.70"/><path d="M1213.64 1462.87 Q1213.64 1458.20 1218.00 1458.20 Q1222.47 1458.20 1222.47 1462.26 Q1222.47 1464.90 1218.20 1466.12 V1467.74"/><circle cx="1218.00" cy="1471.80" r="1.93" fill="#8a8a8a" stroke="none"/></g>
<g fill="none" stroke="#8a8a8a" stroke-width="3.3" stroke-linecap="round" stroke-linejoin="round"><circle cx="1910.80" cy="1465.51" r="13.70"/><path d="M1906.44 1462.87 Q1906.44 1458.20 1910.80 1458.20 Q1915.27 1458.20 1915.27 1462.26 Q1915.27 1464.90 1911.00 1466.12 V1467.74"/><circle cx="1910.80" cy="1471.80" r="1.93" fill="#8a8a8a" stroke="none"/></g>
<g fill="none" stroke="#8a8a8a" stroke-width="3.3" stroke-linecap="round" stroke-linejoin="round"><circle cx="1218.00" cy="1531.39" r="13.70"/><path d="M1213.64 1528.75 Q1213.64 1524.08 1218.00 1524.08 Q1222.47 1524.08 1222.47 1528.14 Q1222.47 1530.78 1218.20 1532.00 V1533.62"/><circle cx="1218.00" cy="1537.68" r="1.93" fill="#8a8a8a" stroke="none"/></g>
<g fill="none" stroke="#8a8a8a" stroke-width="3.3" stroke-linecap="round" stroke-linejoin="round"><circle cx="1910.80" cy="1531.39" r="13.70"/><path d="M1906.44 1528.75 Q1906.44 1524.08 1910.80 1524.08 Q1915.27 1524.08 1915.27 1528.14 Q1915.27 1530.78 1911.00 1532.00 V1533.62"/><circle cx="1910.80" cy="1537.68" r="1.93" fill="#8a8a8a" stroke="none"/></g>
<g fill="none" stroke="#8a8a8a" stroke-width="3.3" stroke-linecap="round" stroke-linejoin="round"><circle cx="1218.00" cy="1597.27" r="13.70"/><path d="M1213.64 1594.63 Q1213.64 1589.96 1218.00 1589.96 Q1222.47 1589.96 1222.47 1594.02 Q1222.47 1596.66 1218.20 1597.88 V1599.50"/><circle cx="1218.00" cy="1603.56" r="1.93" fill="#8a8a8a" stroke="none"/></g>
<g fill="none" stroke="#8a8a8a" stroke-width="3.3" stroke-linecap="round" stroke-linejoin="round"><circle cx="1910.80" cy="1597.27" r="13.70"/><path d="M1906.44 1594.63 Q1906.44 1589.96 1910.80 1589.96 Q1915.27 1589.96 1915.27 1594.02 Q1915.27 1596.66 1911.00 1597.88 V1599.50"/><circle cx="1910.80" cy="1603.56" r="1.93" fill="#8a8a8a" stroke="none"/></g>
<g fill="none" stroke="#8a8a8a" stroke-width="3.3" stroke-linecap="round" stroke-linejoin="round"><circle cx="1218.00" cy="1663.15" r="13.70"/><path d="M1213.64 1660.51 Q1213.64 1655.84 1218.00 1655.84 Q1222.47 1655.84 1222.47 1659.90 Q1222.47 1662.54 1218.20 1663.76 V1665.38"/><circle cx="1218.00" cy="1669.44" r="1.93" fill="#8a8a8a" stroke="none"/></g>
<g fill="none" stroke="#8a8a8a" stroke-width="3.3" stroke-linecap="round" stroke-linejoin="round"><circle cx="1910.80" cy="1663.15" r="13.70"/><path d="M1906.44 1660.51 Q1906.44 1655.84 1910.80 1655.84 Q1915.27 1655.84 1915.27 1659.90 Q1915.27 1662.54 1911.00 1663.76 V1665.38"/><circle cx="1910.80" cy="1669.44" r="1.93" fill="#8a8a8a" stroke="none"/></g>
<g fill="none" stroke="#8a8a8a" stroke-width="3.3" stroke-linecap="round" stroke-linejoin="round"><circle cx="1218.00" cy="1729.03" r="13.70"/><path d="M1213.64 1726.39 Q1213.64 1721.72 1218.00 1721.72 Q1222.47 1721.72 1222.47 1725.78 Q1222.47 1728.42 1218.20 1729.64 V1731.26"/><circle cx="1218.00" cy="1735.32" r="1.93" fill="#8a8a8a" stroke="none"/></g>
<g fill="none" stroke="#8a8a8a" stroke-width="3.3" stroke-linecap="round" stroke-linejoin="round"><circle cx="1910.80" cy="1729.03" r="13.70"/><path d="M1906.44 1726.39 Q1906.44 1721.72 1910.80 1721.72 Q1915.27 1721.72 1915.27 1725.78 Q1915.27 1728.42 1911.00 1729.64 V1731.26"/><circle cx="1910.80" cy="1735.32" r="1.93" fill="#8a8a8a" stroke="none"/></g>
<g fill="none" stroke="#8a8a8a" stroke-width="3.3" stroke-linecap="round" stroke-linejoin="round"><circle cx="1218.00" cy="1794.91" r="13.70"/><path d="M1213.64 1792.27 Q1213.64 1787.60 1218.00 1787.60 Q1222.47 1787.60 1222.47 1791.66 Q1222.47 1794.30 1218.20 1795.52 V1797.14"/><circle cx="1218.00" cy="1801.20" r="1.93" fill="#8a8a8a" stroke="none"/></g>
<g fill="none" stroke="#8a8a8a" stroke-width="3.3" stroke-linecap="round" stroke-linejoin="round"><circle cx="1910.80" cy="1794.91" r="13.70"/><path d="M1906.44 1792.27 Q1906.44 1787.60 1910.80 1787.60 Q1915.27 1787.60 1915.27 1791.66 Q1915.27 1794.30 1911.00 1795.52 V1797.14"/><circle cx="1910.80" cy="1801.20" r="1.93" fill="#8a8a8a" stroke="none"/></g>
<g fill="none" stroke="#00385c" stroke-width="3.7" stroke-linecap="round"><circle cx="614.00" cy="677.80" r="13.45"/><path d="M614.00 676.60 V684.42"/><circle cx="614.00" cy="671.58" r="2.11" fill="#00385c" stroke="none"/></g>
<g fill="none" stroke="#00385c" stroke-width="3.7" stroke-linecap="round"><circle cx="614.00" cy="1058.40" r="13.45"/><path d="M614.00 1057.20 V1065.02"/><circle cx="614.00" cy="1052.18" r="2.11" fill="#00385c" stroke="none"/></g>
<g fill="none" stroke="#00385c" stroke-width="3.6" stroke-linecap="round"><circle cx="2078.40" cy="1611.80" r="13.40"/><path d="M2078.40 1610.60 V1618.40"/><circle cx="2078.40" cy="1605.60" r="2.10" fill="#00385c" stroke="none"/></g>
<g fill="none" stroke="#8a8a8a" stroke-width="3.4" stroke-linecap="round"><circle cx="611.8" cy="906.8" r="10"/><path d="M619.2 914.2 L626.2 921.2"/></g>
<g fill="none" stroke="#005bd3" stroke-width="3.6" stroke-linecap="round" stroke-linejoin="round"><path d="M1719 516.6 H1745 M1723 524.8 H1741 M1727.5 533 H1736.5"/><path d="M1903 523.2 L1911.5 531.8 L1920 523.2"/></g>
<g fill="none" stroke="#303030" stroke-width="3.4" stroke-linecap="round" stroke-linejoin="round"><path d="M1696 1195 L1704.25 1186.4 L1712.5 1195"/></g>
<g fill="none" stroke="#4a4a4a" stroke-width="3.2" stroke-linecap="round" stroke-linejoin="round"><path d="M2884 882.80 L2890.4 875.00 L2896.8 882.80"/><path d="M2884 889.20 L2890.4 897.00 L2896.8 889.20"/></g>
<g fill="none" stroke="#4a4a4a" stroke-width="3.2" stroke-linecap="round" stroke-linejoin="round"><path d="M2884 1040.60 L2890.4 1032.80 L2896.8 1040.60"/><path d="M2884 1047.00 L2890.4 1054.80 L2896.8 1047.00"/></g>
<g fill="none" stroke="#4a4a4a" stroke-width="3.2" stroke-linecap="round" stroke-linejoin="round"><path d="M2884 1357.80 L2890.4 1350.00 L2896.8 1357.80"/><path d="M2884 1364.20 L2890.4 1372.00 L2896.8 1364.20"/></g>
<g fill="none" stroke="#b5b5b5" stroke-width="3.2" stroke-linecap="round" stroke-linejoin="round"><path d="M2884 1463.20 L2890.4 1455.40 L2896.8 1463.20"/><path d="M2884 1469.60 L2890.4 1477.40 L2896.8 1469.60"/></g>
<g fill="#4a4a4a"><rect x="2921" y="30.3" width="16" height="8" rx="3"/><path d="M2923.8 37 H2934.2 L2936.2 48 H2921.8 Z"/><rect x="2917.3" y="47" width="23.4" height="7.7" rx="3"/><path d="M2926.6 54 H2931.6 L2929.6 62 H2928.6 Z"/></g>
<rect x="2975.8" y="42.8" width="6.4" height="6.4" rx="2.4" fill="#4a4a4a"/>
<rect x="2987.8" y="42.8" width="6.4" height="6.4" rx="2.4" fill="#4a4a4a"/>
<rect x="2999.8" y="42.8" width="6.4" height="6.4" rx="2.4" fill="#4a4a4a"/>
<g fill="none" stroke="#000" stroke-width="3.7" stroke-linejoin="round"><path d="M37.2 47 L43.4 43.1 Q45.2 42 46.3 43.8 L53 53.2 Q54 54.7 55.8 54.7 H62.8"/></g><rect x="37" y="60" width="26" height="3.8" fill="#000"/>
<rect x="2039.8" y="1010" width="891" height="67.2" fill="none" stroke="#22988a" stroke-width="5"/>
<path d="M1851 1001 L2004 1044" stroke="#22988a" stroke-width="4.6" stroke-linecap="butt"/><path d="M2027.5 1050.6 L2007.3 1032.4 L1999.4 1056.5 Z" fill="#22988a" stroke="#22988a" stroke-width="1" stroke-linejoin="round"/>
</svg>
<script>(function(){var w=window.innerWidth;if(w&&Math.abs(w-3024)>2){document.documentElement.style.zoom=(w/3024);}})();</script>
</body></html>
